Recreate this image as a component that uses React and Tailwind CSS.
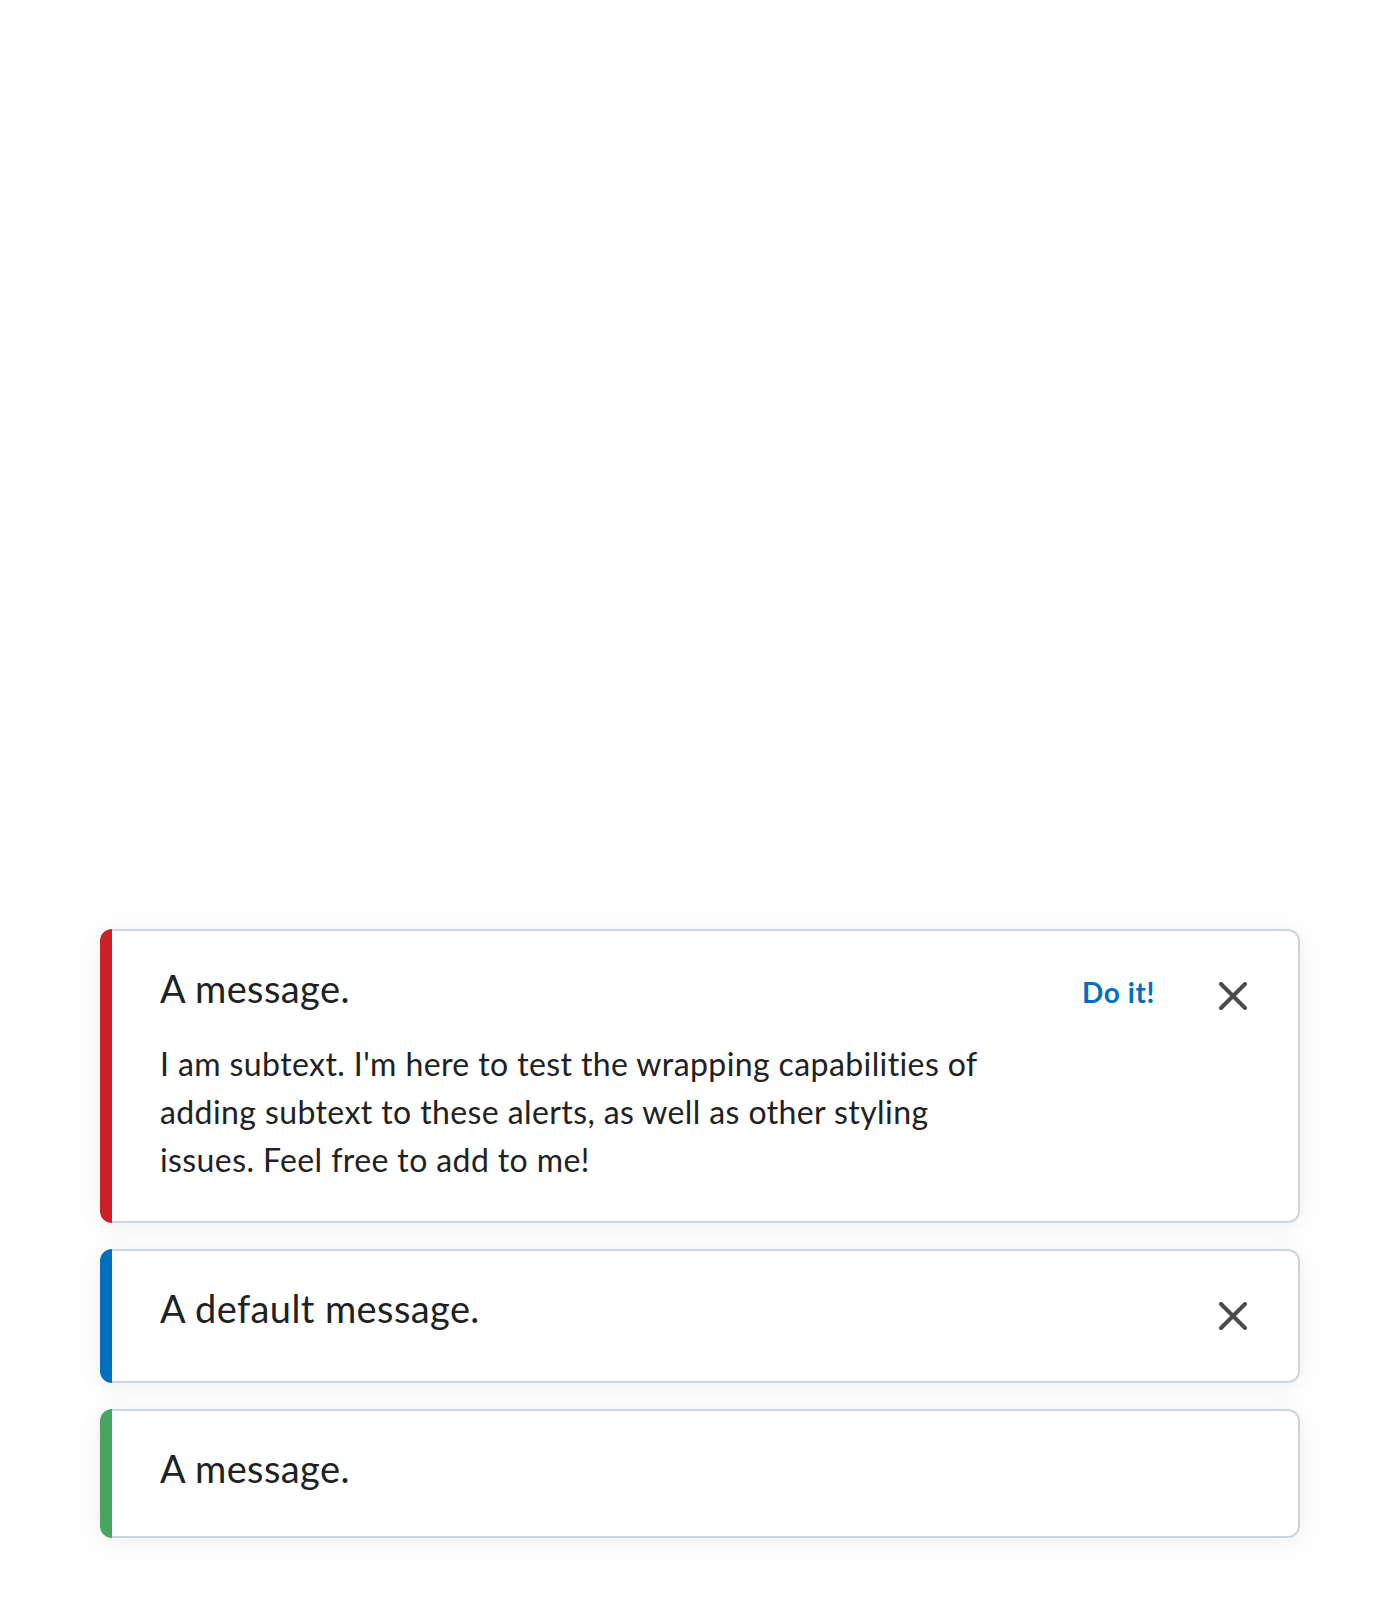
import React from 'react';

const CloseIcon = () => (
  <svg width="28" height="28" viewBox="0 0 28 28" fill="none">
    <path d="M2 2 L26 26 M26 2 L2 26" stroke="#494c4e" strokeWidth="4" strokeLinecap="round" />
  </svg>
);

const alerts = [
  {
    id: 1,
    bar: 'bg-[#cd2026]',
    title: 'A message.',
    subtext:
      "I am subtext. I'm here to test the wrapping capabilities of adding subtext to these alerts, as well as other styling issues. Feel free to add to me!",
    action: 'Do it!',
    closable: true,
  },
  { id: 2, bar: 'bg-[#006fbf]', title: 'A default message.', closable: true },
  { id: 3, bar: 'bg-[#46a661]', title: 'A message.' },
];

const Alert = ({ alert }) => (
  <div className="flex rounded-[12px] bg-white shadow-[0_4px_24px_rgba(86,90,92,0.1)]">
    <div className={`w-[12px] shrink-0 rounded-l-[12px] ${alert.bar}`} />
    <div className="flex flex-1 items-start rounded-r-[12px] border-y-2 border-r-2 border-[#cdd5dc] pl-[48px]">
      <div className={`flex-1 pt-[29px] ${alert.subtext ? 'pb-[37px]' : 'pb-[40px]'}`}>
        <p className="text-[38px] leading-[56px] tracking-[0.4px] text-[#202122]">{alert.title}</p>
        {alert.subtext && (
          <p className="mt-[24px] max-w-[840px] text-[32px] leading-[48px] tracking-[0.4px] text-[#202122]">
            {alert.subtext}
          </p>
        )}
      </div>
      {alert.action && (
        <button className="mt-[41px] mr-[13px] ml-[40px] text-[28px] font-bold leading-[40px] tracking-[0.6px] text-[#006fbf]">
          {alert.action}
        </button>
      )}
      {alert.closable && (
        <button className="m-[21px] flex h-[88px] w-[88px] items-center justify-center" title="Close">
          <CloseIcon />
        </button>
      )}
    </div>
  </div>
);

export default function App() {
  return (
    <div
      className="flex min-h-[1600px] flex-col justify-end gap-[26px] bg-white px-[100px] pb-[62px]"
      style={{ fontFamily: 'Lato, "Noto Sans", sans-serif' }}
    >
      {alerts.map((alert) => (
        <Alert key={alert.id} alert={alert} />
      ))}
    </div>
  );
}
